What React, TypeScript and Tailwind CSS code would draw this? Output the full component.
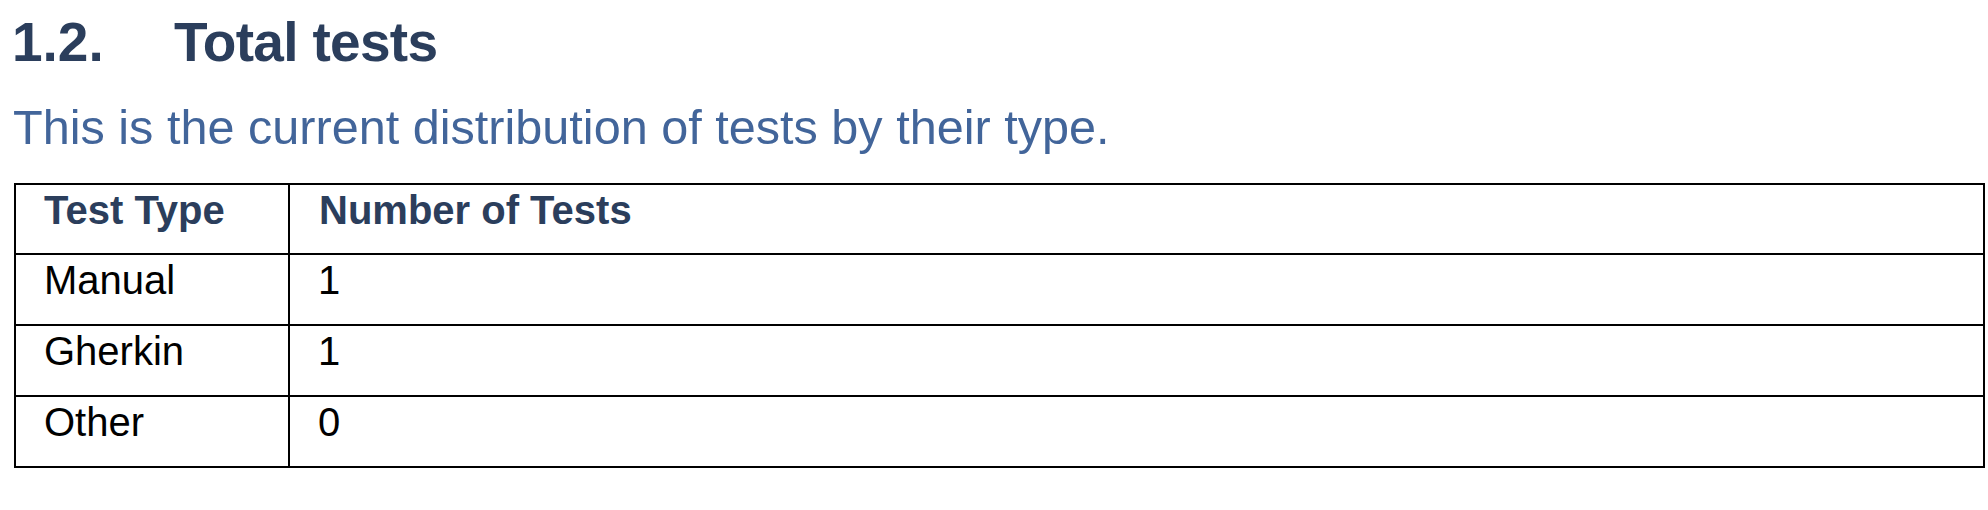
import React from "react";

const rows = [
  ["Manual", "1"],
  ["Gherkin", "1"],
  ["Other", "0"],
];

export default function App() {
  return (
    <div
      className="w-[1988px] h-[510px] bg-white overflow-hidden"
      style={{ fontFamily: '"Liberation Sans", Arial, Helvetica, sans-serif' }}
    >
      <h2 className="flex pl-[12px] pt-[10px] text-[55px] leading-[64px] font-bold text-[#2b3e5c]">
        <span className="w-[162px]">1.2.</span>
        <span className="tracking-[-0.7px]">Total tests</span>
      </h2>
      <p className="pl-[13px] mt-[26px] text-[48.6px] leading-[55px] text-[#42659a]">
        This is the current distribution of tests by their type.
      </p>
      <div className="mt-[28px] ml-[14px] w-[1971px] border-2 border-black text-[40px] leading-[46px]">
        <div className="flex h-[68px] font-bold text-[#2b3e5c]">
          <div className="w-[272px] pl-[28px] pt-[2px]">Test Type</div>
          <div className="flex-1 border-l-2 border-black pl-[29px] pt-[2px]">Number of Tests</div>
        </div>
        {rows.map(([t, n]) => (
          <div key={t} className="flex h-[71px] border-t-2 border-black text-black">
            <div className="w-[272px] pl-[28px] pt-[2px]">{t}</div>
            <div className="flex-1 border-l-2 border-black pl-[28px] pt-[2px]">{n}</div>
          </div>
        ))}
      </div>
    </div>
  );
}
